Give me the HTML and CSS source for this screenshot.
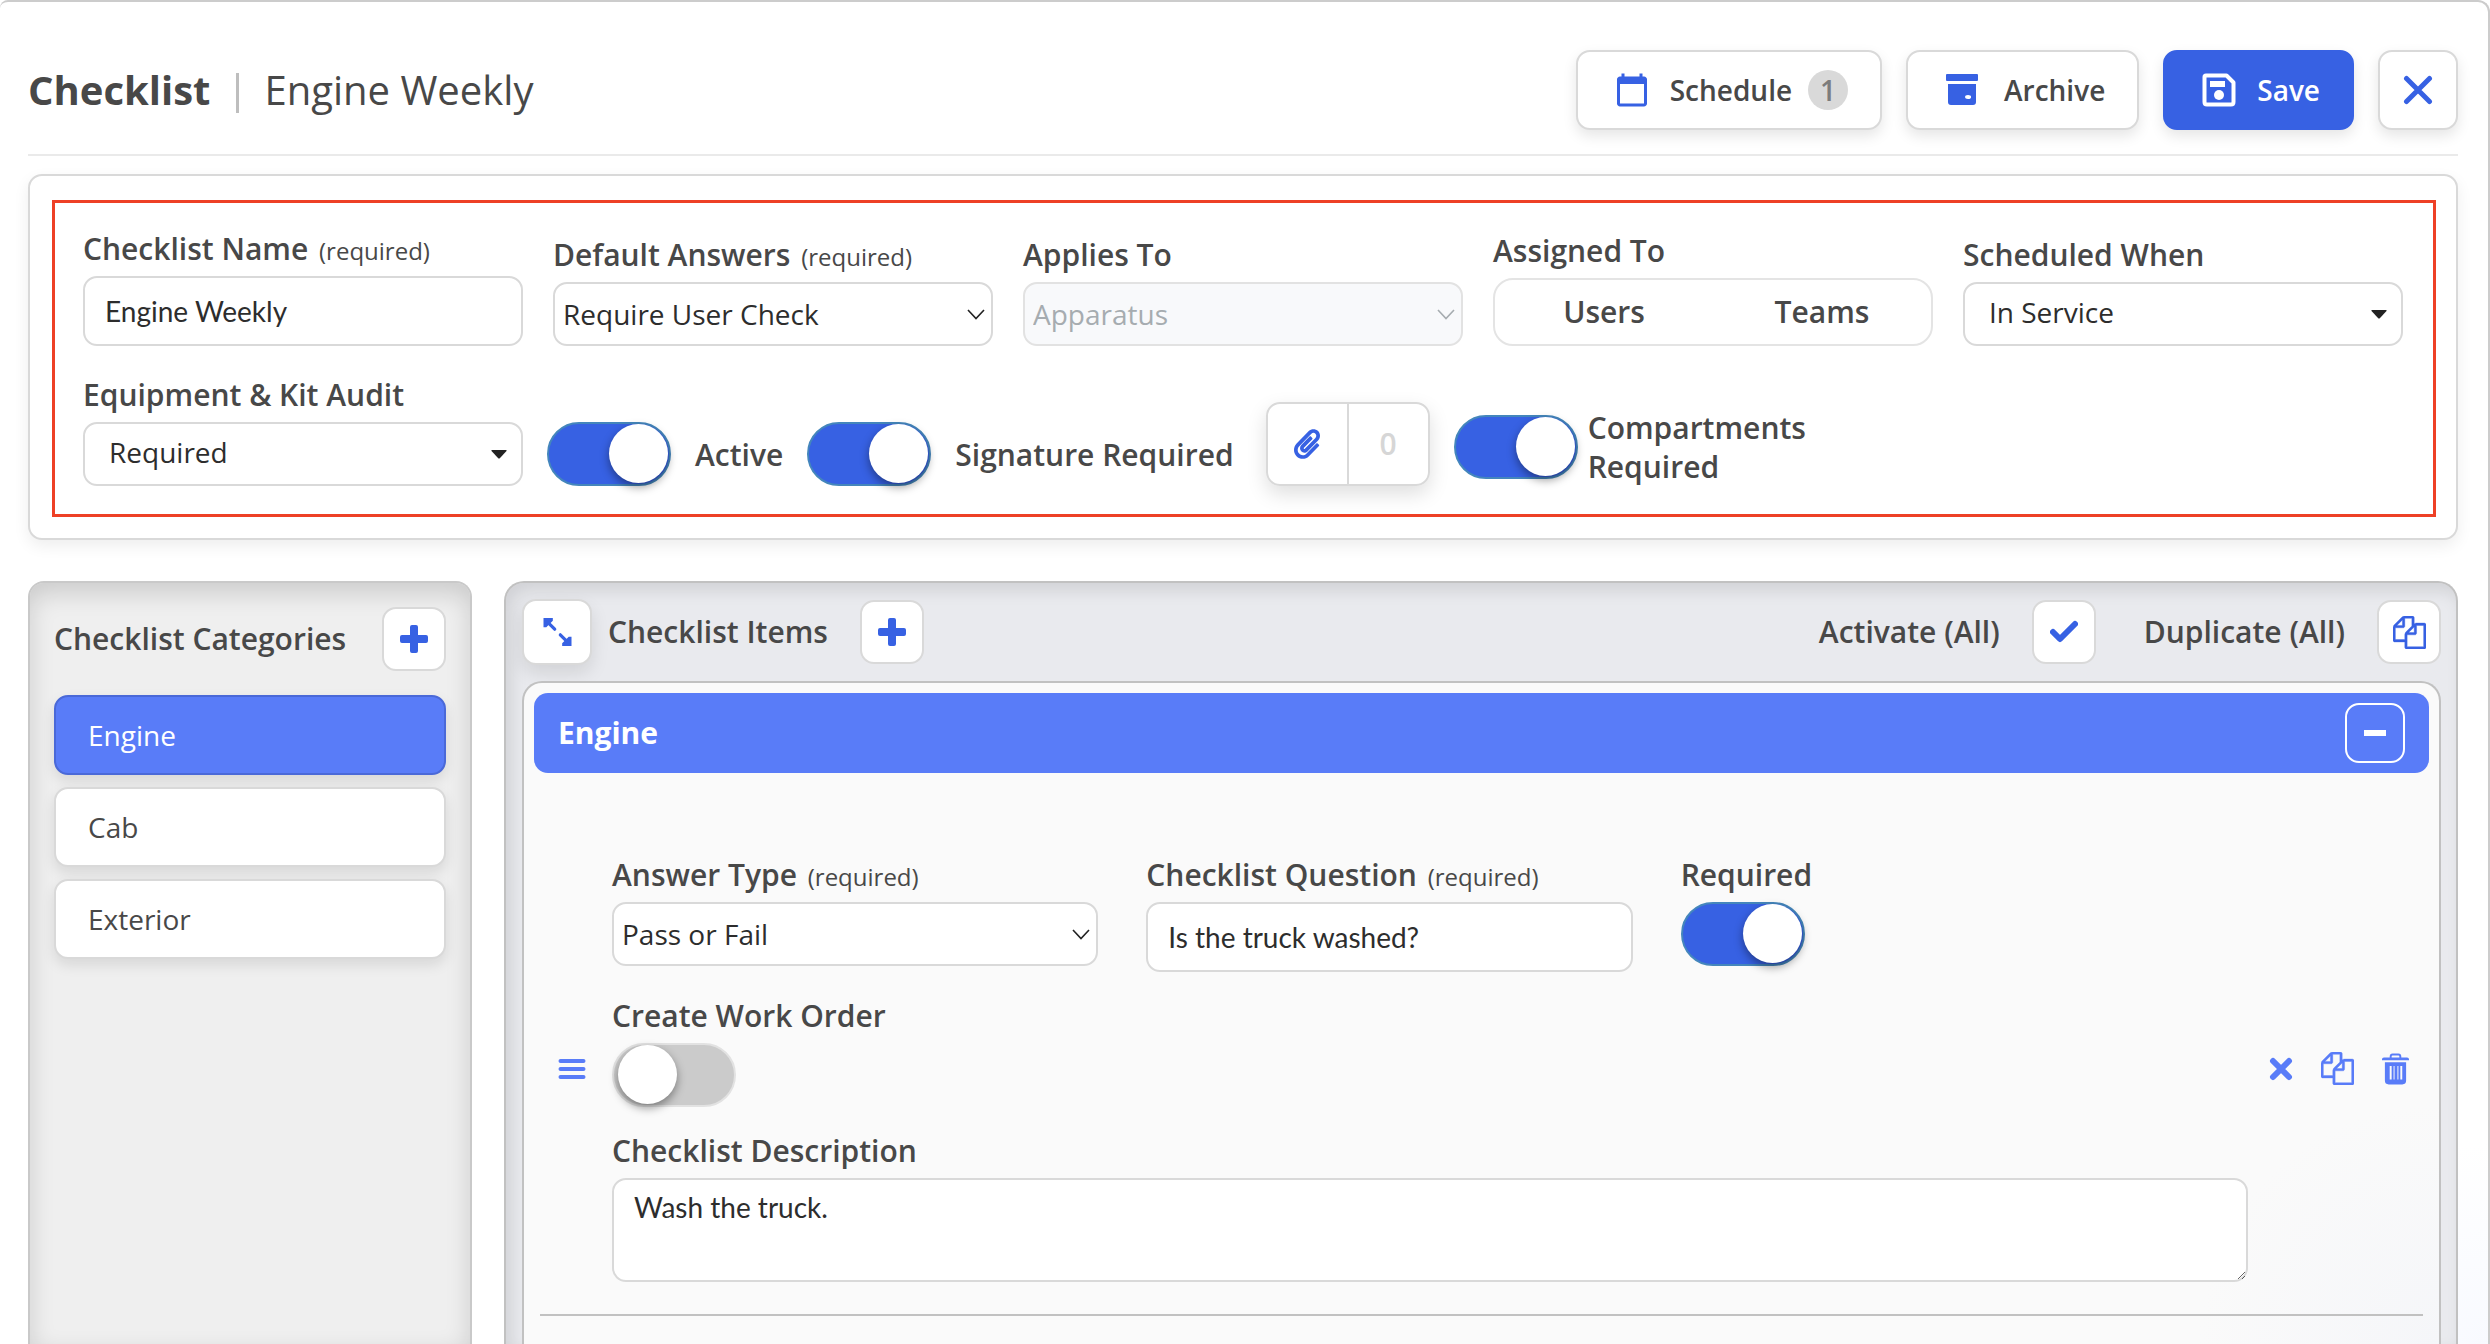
FILE: index.html
```html
<!DOCTYPE html>
<html lang="en">
<head>
<meta charset="utf-8">
<title>Checklist | Engine Weekly</title>
<meta name="viewport" content="width=device-width, initial-scale=1">
<link rel="stylesheet" href="styles.css">
</head>
<body>
<svg class="sprite" aria-hidden="true">
  <symbol id="plus" viewBox="0 0 28 28"><path fill="currentColor" d="M12 0h4q2 0 2 2v8h8q2 0 2 2v4q0 2-2 2h-8v8q0 2-2 2h-4q-2 0-2-2v-8H2q-2 0-2-2v-4q0-2 2-2h8V2q0-2 2-2z"/></symbol>
  <symbol id="copy" viewBox="0 0 1792 1792"><path fill="currentColor" stroke="currentColor" stroke-width="20" d="M1696 384q40 0 68 28t28 68v1216q0 40-28 68t-68 28h-960q-40 0-68-28t-28-68v-288h-544q-40 0-68-28t-28-68v-672q0-40 20-88t48-76l408-408q28-28 76-48t88-20h416q40 0 68 28t28 68v328q68-40 128-40h416zm-544 213l-299 299h299v-299zm-640-384l-299 299h299v-299zm196 647l316-316v-416h-384v416q0 40-28 68t-68 28h-416v640h512v-256q0-40 20-88t48-76zm956 804v-1152h-384v416q0 40-28 68t-68 28h-416v640h896z"/></symbol>
  <symbol id="chevron" viewBox="0 0 18 11"><path fill="none" stroke="currentColor" stroke-width="1.600" d="M1 1l8 8.500 8-8.500"/></symbol>
  <symbol id="caret" viewBox="0 0 16 9"><path fill="currentColor" d="M1 0h14q1 0 .5 1L9 8Q8 9 7 8L.5 1Q0 0 1 0z"/></symbol>
</svg>
<main class="page">
  <header class="header">
    <h1 class="title"><strong class="title-kind">Checklist</strong><span class="title-name">Engine Weekly</span></h1>
    <div class="header-actions">
      <button class="btn" type="button">
        <svg class="icon-lg" viewBox="0 0 24 24"><path fill="currentColor" d="M20 3h-1V1h-2v2H7V1H5v2H4c-1.100 0-2 .9-2 2v16c0 1.100.9 2 2 2h16c1.100 0 2-.9 2-2V5c0-1.100-.9-2-2-2zm0 18H4V8h16v13z"/></svg>
        <span>Schedule</span><span class="badge">1</span>
      </button>
      <button class="btn btn-archive" type="button">
        <svg class="icon-lg" viewBox="0 0 36 36"><path fill="currentColor" fill-rule="evenodd" d="M3 2h30q1 0 1 1v5q0 1-1 1H3Q2 9 2 8V3q0-1 1-1zM4 12h28v18q0 3-3 3H7q-3 0-3-3zm20 11a3 2 0 1 0 .1 4a3 2 0 0 0-.1-4z"/></svg>
        <span>Archive</span>
      </button>
      <button class="btn btn-primary" type="button">
        <svg class="icon-lg" viewBox="0 0 36 36"><path fill="none" stroke="currentColor" stroke-width="4" stroke-linejoin="round" d="M5 3.500h20.500l7 7V30q0 2.500-2.500 2.500H6Q3.500 32.500 3.500 30V5q0-1.500 1.500-1.500z"/><path fill="currentColor" d="M9 9h15v6H9z"/><circle cx="18" cy="23" r="5" fill="currentColor"/></svg>
        <span>Save</span>
      </button>
      <button class="btn btn-close" type="button" aria-label="Close">
        <svg class="icon-close" viewBox="0 0 30 30"><path fill="none" stroke="currentColor" stroke-width="5" stroke-linecap="round" d="M3.500 3.500l23 23M26.500 3.500l-23 23"/></svg>
      </button>
    </div>
  </header>

  <section class="settings">
    <form class="settings-form">
      <div class="field-grid">
        <div class="field">
          <label class="label" for="name">Checklist Name <small>(required)</small></label>
          <input class="text-input" id="name" type="text" value="Engine Weekly">
        </div>
        <div class="field">
          <label class="label" for="defaults">Default Answers <small>(required)</small></label>
          <div class="select-wrap"><select class="select" id="defaults"><option>Require User Check</option></select><svg class="chevron"><use href="#chevron"/></svg></div>
        </div>
        <div class="field">
          <label class="label" for="applies">Applies To</label>
          <div class="select-wrap is-disabled"><select class="select" id="applies" disabled><option>Apparatus</option></select><svg class="chevron"><use href="#chevron"/></svg></div>
        </div>
        <div class="field" role="group" aria-labelledby="assigned">
          <span class="label" id="assigned">Assigned To</span>
          <div class="segmented"><button type="button">Users</button><button type="button">Teams</button></div>
        </div>
        <div class="field">
          <label class="label" for="when">Scheduled When</label>
          <div class="select-wrap"><select class="select select-wide" id="when"><option>In Service</option></select><svg class="caret"><use href="#caret"/></svg></div>
        </div>
        <div class="field">
          <label class="label" for="audit">Equipment &amp; Kit Audit</label>
          <div class="select-wrap"><select class="select select-wide" id="audit"><option>Required</option></select><svg class="caret"><use href="#caret"/></svg></div>
        </div>
        <div class="toggles">
          <label class="toggle"><input class="switch" type="checkbox" checked>Active</label>
          <label class="toggle"><input class="switch" type="checkbox" checked>Signature Required</label>
          <div class="attach">
            <button type="button" aria-label="Attach file"><svg class="clip" viewBox="0 0 448 512"><path fill="currentColor" d="M43.246 466.142c-58.430-60.289-57.341-157.511 1.386-217.581L254.392 34c44.316-45.332 116.351-45.336 160.671 0 43.890 44.894 43.943 117.329 0 162.276L232.214 383.128c-29.855 30.537-78.633 30.111-107.982-.998-28.275-29.970-27.368-77.473 1.452-106.953l143.743-146.835c6.182-6.314 16.312-6.422 22.626-.241l22.861 22.379c6.315 6.182 6.422 16.312.241 22.626L171.427 319.927c-4.932 5.045-5.236 13.428-.648 18.292 4.372 4.634 11.245 4.711 15.688.165l182.849-186.851c19.613-20.062 19.613-52.725-.011-72.798-19.189-19.627-49.957-19.637-69.154 0L90.390 293.295c-34.763 35.560-35.299 93.120-1.191 128.313 34.010 35.093 88.985 35.137 123.058.286l172.060-175.999c6.177-6.319 16.307-6.433 22.626-.256l22.877 22.364c6.319 6.177 6.434 16.307.256 22.626l-172.060 175.998c-59.576 60.938-155.943 60.216-214.770-.485z"/></svg></button>
            <span class="attach-count">0</span>
          </div>
          <label class="toggle toggle-stacked"><input class="switch" type="checkbox" checked><span>Compartments<br>Required</span></label>
        </div>
      </div>
    </form>
  </section>

  <div class="workspace">
    <aside class="categories">
      <div class="categories-head">
        <h2 class="heading">Checklist Categories</h2>
        <button class="square-btn" type="button" aria-label="Add category"><svg class="icon-md"><use href="#plus"/></svg></button>
      </div>
      <nav class="category-list">
        <button class="category is-active" type="button">Engine</button>
        <button class="category" type="button">Cab</button>
        <button class="category" type="button">Exterior</button>
      </nav>
    </aside>

    <section class="items">
      <div class="items-head">
        <button class="square-btn square-btn-raised" type="button" aria-label="Expand"><svg class="icon-exp" viewBox="0 0 30 30"><path fill="none" stroke="currentColor" stroke-width="3.500" stroke-linecap="round" d="M3 3l9 9M18 18l9 9"/><path fill="currentColor" d="M0 0h10v3L3 10H0zM30 30H20v-3l7-7h3z"/></svg></button>
        <h2 class="heading">Checklist Items</h2>
        <button class="square-btn btn-add" type="button" aria-label="Add item"><svg class="icon-md"><use href="#plus"/></svg></button>
        <div class="bulk">
          <label for="activate">Activate (All)</label>
          <button class="square-btn" id="activate" type="button"><svg class="icon-md" viewBox="0 0 28 28"><path fill="none" stroke="currentColor" stroke-width="6" stroke-linecap="round" stroke-linejoin="round" d="M3 14l7 7L25 6"/></svg></button>
          <label class="bulk-duplicate" for="duplicate">Duplicate (All)</label>
          <button class="square-btn" id="duplicate" type="button"><svg class="icon-copy"><use href="#copy"/></svg></button>
        </div>
      </div>

      <div class="group">
        <div class="group-head">
          <h3>Engine</h3>
          <button class="collapse" type="button" aria-label="Collapse"><svg class="icon-minus" viewBox="0 0 22 6"><path fill="currentColor" d="M0 0h22v6H0z"/></svg></button>
        </div>
        <article class="item">
          <button class="icon-btn drag" type="button" aria-label="Reorder"><svg class="icon-md" viewBox="0 0 28 28"><path stroke="currentColor" stroke-width="4" stroke-linecap="round" d="M2.500 6h23M2.500 14h23M2.500 22h23"/></svg></button>
          <div class="item-form">
            <div class="item-row">
              <div class="field-top">
                <label class="label" for="type">Answer Type <small>(required)</small></label>
                <div class="select-wrap"><select class="select" id="type"><option>Pass or Fail</option></select><svg class="chevron"><use href="#chevron"/></svg></div>
              </div>
              <div class="field-top">
                <label class="label" for="question">Checklist Question <small>(required)</small></label>
                <input class="text-input" id="question" type="text" value="Is the truck washed?">
              </div>
              <div class="field-top">
                <label class="label" for="required">Required</label>
                <input class="switch" id="required" type="checkbox" checked>
              </div>
            </div>
            <div class="field-top">
              <label class="label" for="order">Create Work Order</label>
              <input class="switch" id="order" type="checkbox">
            </div>
            <div class="field-top">
              <label class="label" for="description">Checklist Description</label>
              <textarea class="textarea" id="description">Wash the truck.</textarea>
            </div>
          </div>
          <div class="item-actions">
            <button class="icon-btn" type="button" aria-label="Remove"><svg class="icon-x" viewBox="0 0 24 24"><path stroke="currentColor" stroke-width="6" stroke-linecap="round" d="M4 4l16 16M20 4L4 20"/></svg></button>
            <button class="icon-btn" type="button" aria-label="Duplicate"><svg class="icon-copy"><use href="#copy"/></svg></button>
            <button class="icon-btn" type="button" aria-label="Delete"><svg class="icon-trash" viewBox="0 0 28 32"><path fill="currentColor" fill-rule="evenodd" d="M8 4V3q0-3 3-3h6q3 0 3 3v1h6q2 0 2 2v1H0V6q0-2 2-2zm2 0h8V3q0-1-1-1h-6q-1 0-1 1zM3 9h22v19q0 4-4 4H7q-4 0-4-4zm5 4v14h2V13zm4 0v14h1V13zm4 0v14h1V13zm3 0v14h2V13z"/></svg></button>
          </div>
        </article>
      </div>
    </section>
  </div>
</main>
</body>
</html>
```
FILE: styles.css
```css
:root {
  --blue: #3761e3;
  --blue-light: #597cf8;
  --text: #484848;
  --ink: #2d2d2d;
  --line: #d9d9d9;
  --shadow: 0 6px 14px rgba(0, 0, 0, .1);
}

* { box-sizing: border-box; }

body {
  margin: 0;
  background: #fff;
  color: var(--text);
  font: 28px/40px "Open Sans", "Noto Sans", sans-serif;
}

button, input, select, textarea { font: inherit; color: inherit; margin: 0; }
button { padding: 0; border: 0; background: none; cursor: pointer; }
h1, h2, h3 { margin: 0; font-weight: 600; }
svg { display: block; flex: none; }
.sprite { position: absolute; width: 0; height: 0; }

.page {
  display: flex;
  flex-direction: column;
  min-height: 100vh;
  padding: 0 30px 0 28px;
  border-top: 2px solid #ccc;
  border-right: 2px solid #ccc;
  border-radius: 8px 12px 0 0;
  background: radial-gradient(circle at 100% 100%, #f8faff, #fff 200px);
}

/* Header */
.header {
  display: flex;
  align-items: center;
  justify-content: space-between;
  padding: 48px 0 24px;
  border-bottom: 2px solid #eaeaea;
}
.title { display: flex; align-items: center; font-size: 40px; line-height: 54px; font-weight: 400; }
.title-kind { font-weight: 700; }
.title-name { display: flex; align-items: center; }
.title-name::before { content: ""; width: 3px; height: 40px; margin: 6px 25px 0 26px; background: #bebebe; }
.header-actions { display: flex; gap: 24px; }
.btn {
  display: flex;
  align-items: center;
  height: 80px;
  padding: 0 32px 0 36px;
  border: 2px solid var(--line);
  border-radius: 14px;
  background: #fff;
  box-shadow: var(--shadow);
  font-weight: 600;
}
.btn svg { color: var(--blue); }
.btn span { margin-left: 20px; }
.btn .badge {
  width: 40px;
  margin-left: 16px;
  border-radius: 20px;
  background: #d9d9d9;
  color: #7c7c7c;
  line-height: 40px;
  text-align: center;
}
.btn-archive svg { margin-right: 4px; }
.btn-primary { border-color: var(--blue); background: var(--blue); color: #fff; }
.btn-primary svg { color: #fff; }
.btn-close { width: 80px; padding: 0; justify-content: center; }
.icon-lg { width: 36px; height: 36px; }
.icon-close { width: 30px; height: 30px; }

/* Checklist settings */
.settings {
  margin-top: 18px;
  padding: 24px 20px 21px 22px;
  border: 2px solid var(--line);
  border-radius: 14px;
  background: #fff;
  box-shadow: 0 6px 16px rgba(0, 0, 0, .07);
}
.settings-form { padding: 26px 30px 28px 28px; border: 3px solid #ee4026; }
.field-grid { display: grid; grid-template-columns: repeat(5, 1fr); gap: 29px 30px; align-items: end; }
.field, .field-top { display: flex; flex-direction: column; gap: 8px; min-width: 0; }
.label { font-size: 30px; line-height: 39px; font-weight: 600; white-space: nowrap; }
.label small { margin-left: 3px; font-size: 24px; line-height: 24px; font-weight: 400; }

.text-input, .select, .textarea {
  width: 100%;
  border: 2px solid var(--line);
  border-radius: 14px;
  background: #fff;
  color: var(--ink);
}
.text-input { height: 70px; padding: 0 20px; font-family: Lato, sans-serif; }
.textarea { display: block; height: 104px; padding: 8px 20px; font-family: Lato, sans-serif; line-height: 38px; resize: vertical; }
.select-wrap { display: grid; align-items: center; }
.select-wrap > * { grid-area: 1 / 1; }
.select { height: 64px; padding: 0 8px; appearance: none; opacity: 1; }
.select-wide { padding: 0 24px 4px; }
.chevron, .caret { justify-self: end; pointer-events: none; color: #222; }
.chevron { width: 18px; height: 11px; margin-right: 8px; }
.caret { width: 16px; height: 9px; margin-right: 16px; }
.is-disabled .select { border-color: #e2e2e2; background: #f8f9fb; color: #a6acb0; }
.is-disabled .chevron { color: #a6acb0; }

.segmented { display: flex; height: 68px; border: 2px solid #e4e4e4; border-radius: 20px; }
.segmented button { flex: 1; font-size: 30px; font-weight: 600; }

.toggles { grid-column: 2 / -1; display: flex; align-items: flex-end; gap: 24px; margin-left: -6px; }
.toggle { display: flex; align-items: center; gap: 24px; font-size: 30px; line-height: 39px; font-weight: 600; white-space: nowrap; }
.toggle-stacked { gap: 10px; }

.switch {
  flex: none;
  width: 124px;
  height: 64px;
  border: 2px solid #e2e2e2;
  border-radius: 32px;
  background: #cbcbcb;
  appearance: none;
  cursor: pointer;
}
.switch::before {
  content: "";
  display: block;
  width: 59px;
  height: 59px;
  margin-left: 4px;
  border-radius: 50%;
  background: #fff;
  box-shadow: 0 4px 10px rgba(0, 0, 0, .4);
}
.switch:checked { border-color: #4486bc; background: var(--blue); }
.switch:checked::before { margin-left: 60px; }

.attach {
  display: flex;
  width: 164px;
  height: 84px;
  margin-left: 8px;
  border: 2px solid var(--line);
  border-radius: 14px;
  box-shadow: 0 8px 20px rgba(0, 0, 0, .13);
}
.attach > * { flex: 1; display: flex; align-items: center; justify-content: center; }
.attach button { color: var(--blue); }
.attach-count { border-left: 2px solid var(--line); color: #d6d6d6; font-size: 30px; font-weight: 600; }
.clip { width: 26px; height: 30px; }

/* Workspace */
.workspace { flex: 1; display: grid; grid-template-columns: 444px minmax(0, 1fr); gap: 32px; margin-top: 41px; }
.heading { font-size: 30px; line-height: 40px; white-space: nowrap; }
.square-btn {
  display: flex;
  align-items: center;
  justify-content: center;
  width: 64px;
  height: 64px;
  border: 2px solid var(--line);
  border-radius: 14px;
  background: #fff;
  color: var(--blue);
}
.square-btn-raised { width: 70px; height: 66px; box-shadow: 0 8px 18px rgba(0, 0, 0, .1); }
.icon-md { width: 28px; height: 28px; }
.icon-exp { width: 29px; height: 28px; }
.icon-copy { width: 33px; height: 33px; }

.categories {
  padding: 24px;
  border: 2px solid #c9c9c9;
  border-bottom: 0;
  border-radius: 16px 16px 0 0;
  background: #efefef;
  box-shadow: inset 0 10px 24px rgba(0, 0, 0, .15);
}
.categories-head { display: flex; align-items: center; justify-content: space-between; }
.category-list { display: flex; flex-direction: column; gap: 12px; margin-top: 24px; }
.category {
  height: 80px;
  padding: 0 32px;
  border: 2px solid var(--line);
  border-radius: 14px;
  background: #fff;
  box-shadow: var(--shadow);
  text-align: left;
}
.category.is-active { border-color: #4a69d8; background: var(--blue-light); color: #fff; }

.items {
  display: flex;
  flex-direction: column;
  padding: 16px 15px 0 16px;
  border: 2px solid #c1c1c1;
  border-bottom: 0;
  border-radius: 20px 20px 0 0;
  background: #e9eaee;
  box-shadow: inset 6px 8px 16px rgba(0, 0, 0, .1);
}
.items-head { display: flex; align-items: center; height: 66px; margin-bottom: 16px; }
.items-head .heading { margin: 0 32px 0 16px; }
.bulk { display: flex; align-items: center; gap: 32px; margin-left: auto; font-size: 30px; font-weight: 600; white-space: nowrap; }
.bulk-duplicate { margin-left: 16px; }

.group {
  flex: 1;
  padding: 10px;
  border: 2px solid #c1c1c1;
  border-bottom: 0;
  border-radius: 20px 20px 0 0;
  background: radial-gradient(circle at 100% 100%, #f5f6f9, #fafafa 240px);
}
.group-head {
  display: flex;
  align-items: center;
  justify-content: space-between;
  height: 80px;
  padding: 0 24px;
  border-radius: 14px;
  background: var(--blue-light);
  color: #fff;
}
.group-head h3 { font-size: 30px; line-height: 40px; font-weight: 700; }
.collapse { display: grid; place-items: center; width: 60px; height: 60px; border: 2px solid #fff; border-radius: 14px; }
.icon-minus { width: 22px; height: 6px; }

.item { display: flex; align-items: center; margin: 0 6px; padding: 82px 14px 32px 18px; border-bottom: 2px solid #c1c1c1; }
.icon-btn { color: var(--blue-light); }
.drag { margin-right: 26px; }
.item-form { flex: 1; display: flex; flex-direction: column; gap: 24px; min-width: 0; }
.item-row { display: grid; grid-template-columns: 30fr 30fr 35fr; gap: 48px; }
.item-actions { display: flex; align-items: center; gap: 28px; margin-left: 21px; }
.icon-x { width: 24px; height: 24px; }
.icon-trash { width: 27px; height: 32px; }
```
